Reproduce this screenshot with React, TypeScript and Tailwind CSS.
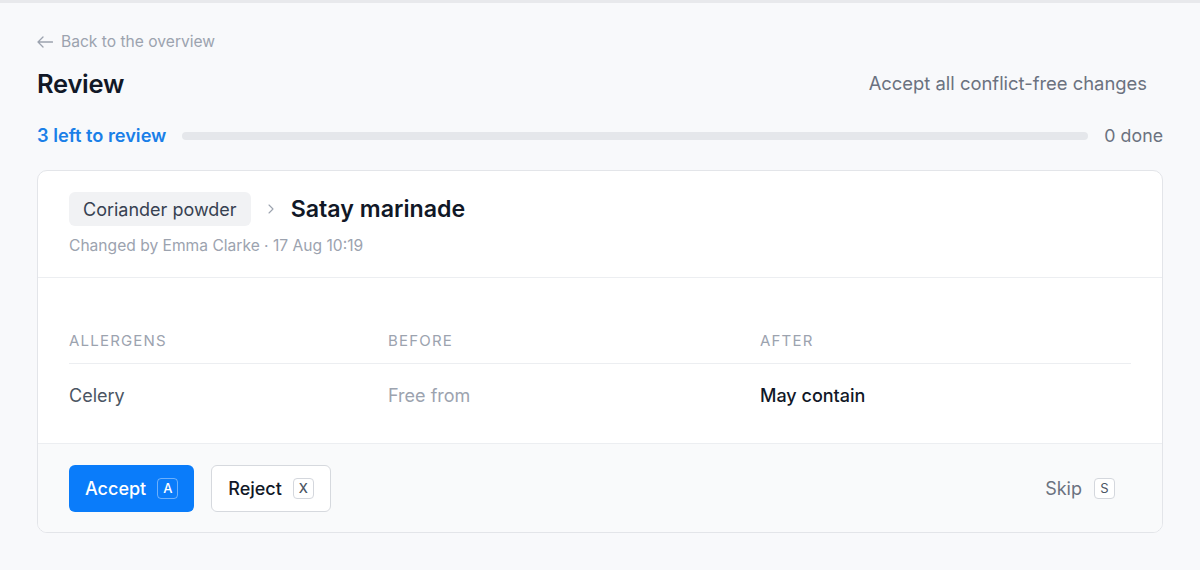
import React from 'react';
import { ChevronRight } from 'lucide-react';

const font = { fontFamily: 'Inter, "Noto Sans", sans-serif' };

function Kbd({ children, tone = 'light' }: { children: React.ReactNode; tone?: 'light' | 'dark' }) {
  const cls =
    tone === 'dark'
      ? 'border-white/40 text-white'
      : 'border-[#d4d7dd] text-[#4b5563] bg-white';
  return (
    <span className={`inline-flex h-[21px] min-w-[21px] items-center justify-center rounded-[4px] border px-[4px] text-[13px] leading-none ${cls}`}>
      {children}
    </span>
  );
}

export default function App() {
  return (
    <div style={font} className="min-h-[570px] w-full border-t-[3px] border-[#e8e9ec] bg-[#f8f9fb] px-[37px] pt-[29px] text-[#111827]">
      <a className="flex h-5 items-center gap-[8px] text-[15.6px] text-[#9ca3af]">
        <svg width="16" height="12" viewBox="0 0 16 12" fill="none" stroke="currentColor" strokeWidth="1.3" strokeLinecap="round" strokeLinejoin="round">
          <path d="M6 1 1 6l5 5M1 6h14.5" />
        </svg>
        <span>Back to the overview</span>
      </a>

      <div className="mt-[16px] flex h-8 items-center justify-between">
        <h1 className="text-[25.5px] font-semibold tracking-[-0.01em] text-[#111827]">Review</h1>
        <button className="px-4 text-[18.4px] text-[#6b7280]">Accept all conflict-free changes</button>
      </div>

      <div className="mt-[24px] flex h-6 items-center gap-4">
        <span className="text-[18.2px] font-semibold text-[#1a7fe8]">3 left to review</span>
        <div className="h-[8px] flex-1 rounded-full bg-[#e5e7eb]" />
        <span className="text-[17.8px] text-[#6b7280]">0 done</span>
      </div>

      <div className="mt-[22px] overflow-hidden rounded-[10px] border border-[#e3e5e9] bg-white">
        <div className="border-b border-[#eceef1] px-[31px] pt-[21px] pb-[21px]">
          <div className="flex items-center">
            <span className="flex h-[34px] items-center rounded-[6px] bg-[#f1f2f4] px-[14px] text-[18px] text-[#374151]">
              Coriander powder
            </span>
            <ChevronRight size={16} strokeWidth={1.6} className="mr-[12px] ml-[12px] text-[#9ca3af]" />
            <h2 className="text-[23.2px] font-semibold text-[#111827]">Satay marinade</h2>
          </div>
          <p className="mt-[9px] text-[15.6px] leading-5 text-[#9ca3af]">Changed by Emma Clarke · 17 Aug 10:19</p>
        </div>

        <div className="px-[31px] pt-[53px] pb-[15px]">
          <div className="grid grid-cols-[319px_372px_1fr] border-b border-[#eceef1] pb-[12px] text-[15px] leading-5 tracking-[0.08em] text-[#9ca3af] uppercase">
            <span>Allergens</span>
            <span>Before</span>
            <span>After</span>
          </div>
          <div className="grid h-[64px] grid-cols-[319px_372px_1fr] items-center text-[18px]">
            <span className="text-[#4b5563]">Celery</span>
            <span className="text-[#9ca3af]">Free from</span>
            <span className="font-medium text-[#111827]">May contain</span>
          </div>
        </div>

        <div className="flex items-center justify-between border-t border-[#eceef1] bg-[#f9fafb] px-[31px] pt-[21px] pb-[20px]">
          <div className="flex items-center gap-[17px]">
            <button className="flex h-[47px] items-center gap-[11px] rounded-[6px] bg-[#0a7cfa] px-4 text-[18px] font-medium text-white">
              Accept
              <Kbd tone="dark">A</Kbd>
            </button>
            <button className="flex h-[47px] items-center gap-[11px] rounded-[6px] border border-[#d6d9de] bg-white px-4 text-[18px] font-medium text-[#111827]">
              Reject
              <Kbd>X</Kbd>
            </button>
          </div>
          <button className="flex h-[47px] items-center gap-[12px] px-4 text-[18px] text-[#6b7280]">
            Skip
            <Kbd>S</Kbd>
          </button>
        </div>
      </div>
    </div>
  );
}
